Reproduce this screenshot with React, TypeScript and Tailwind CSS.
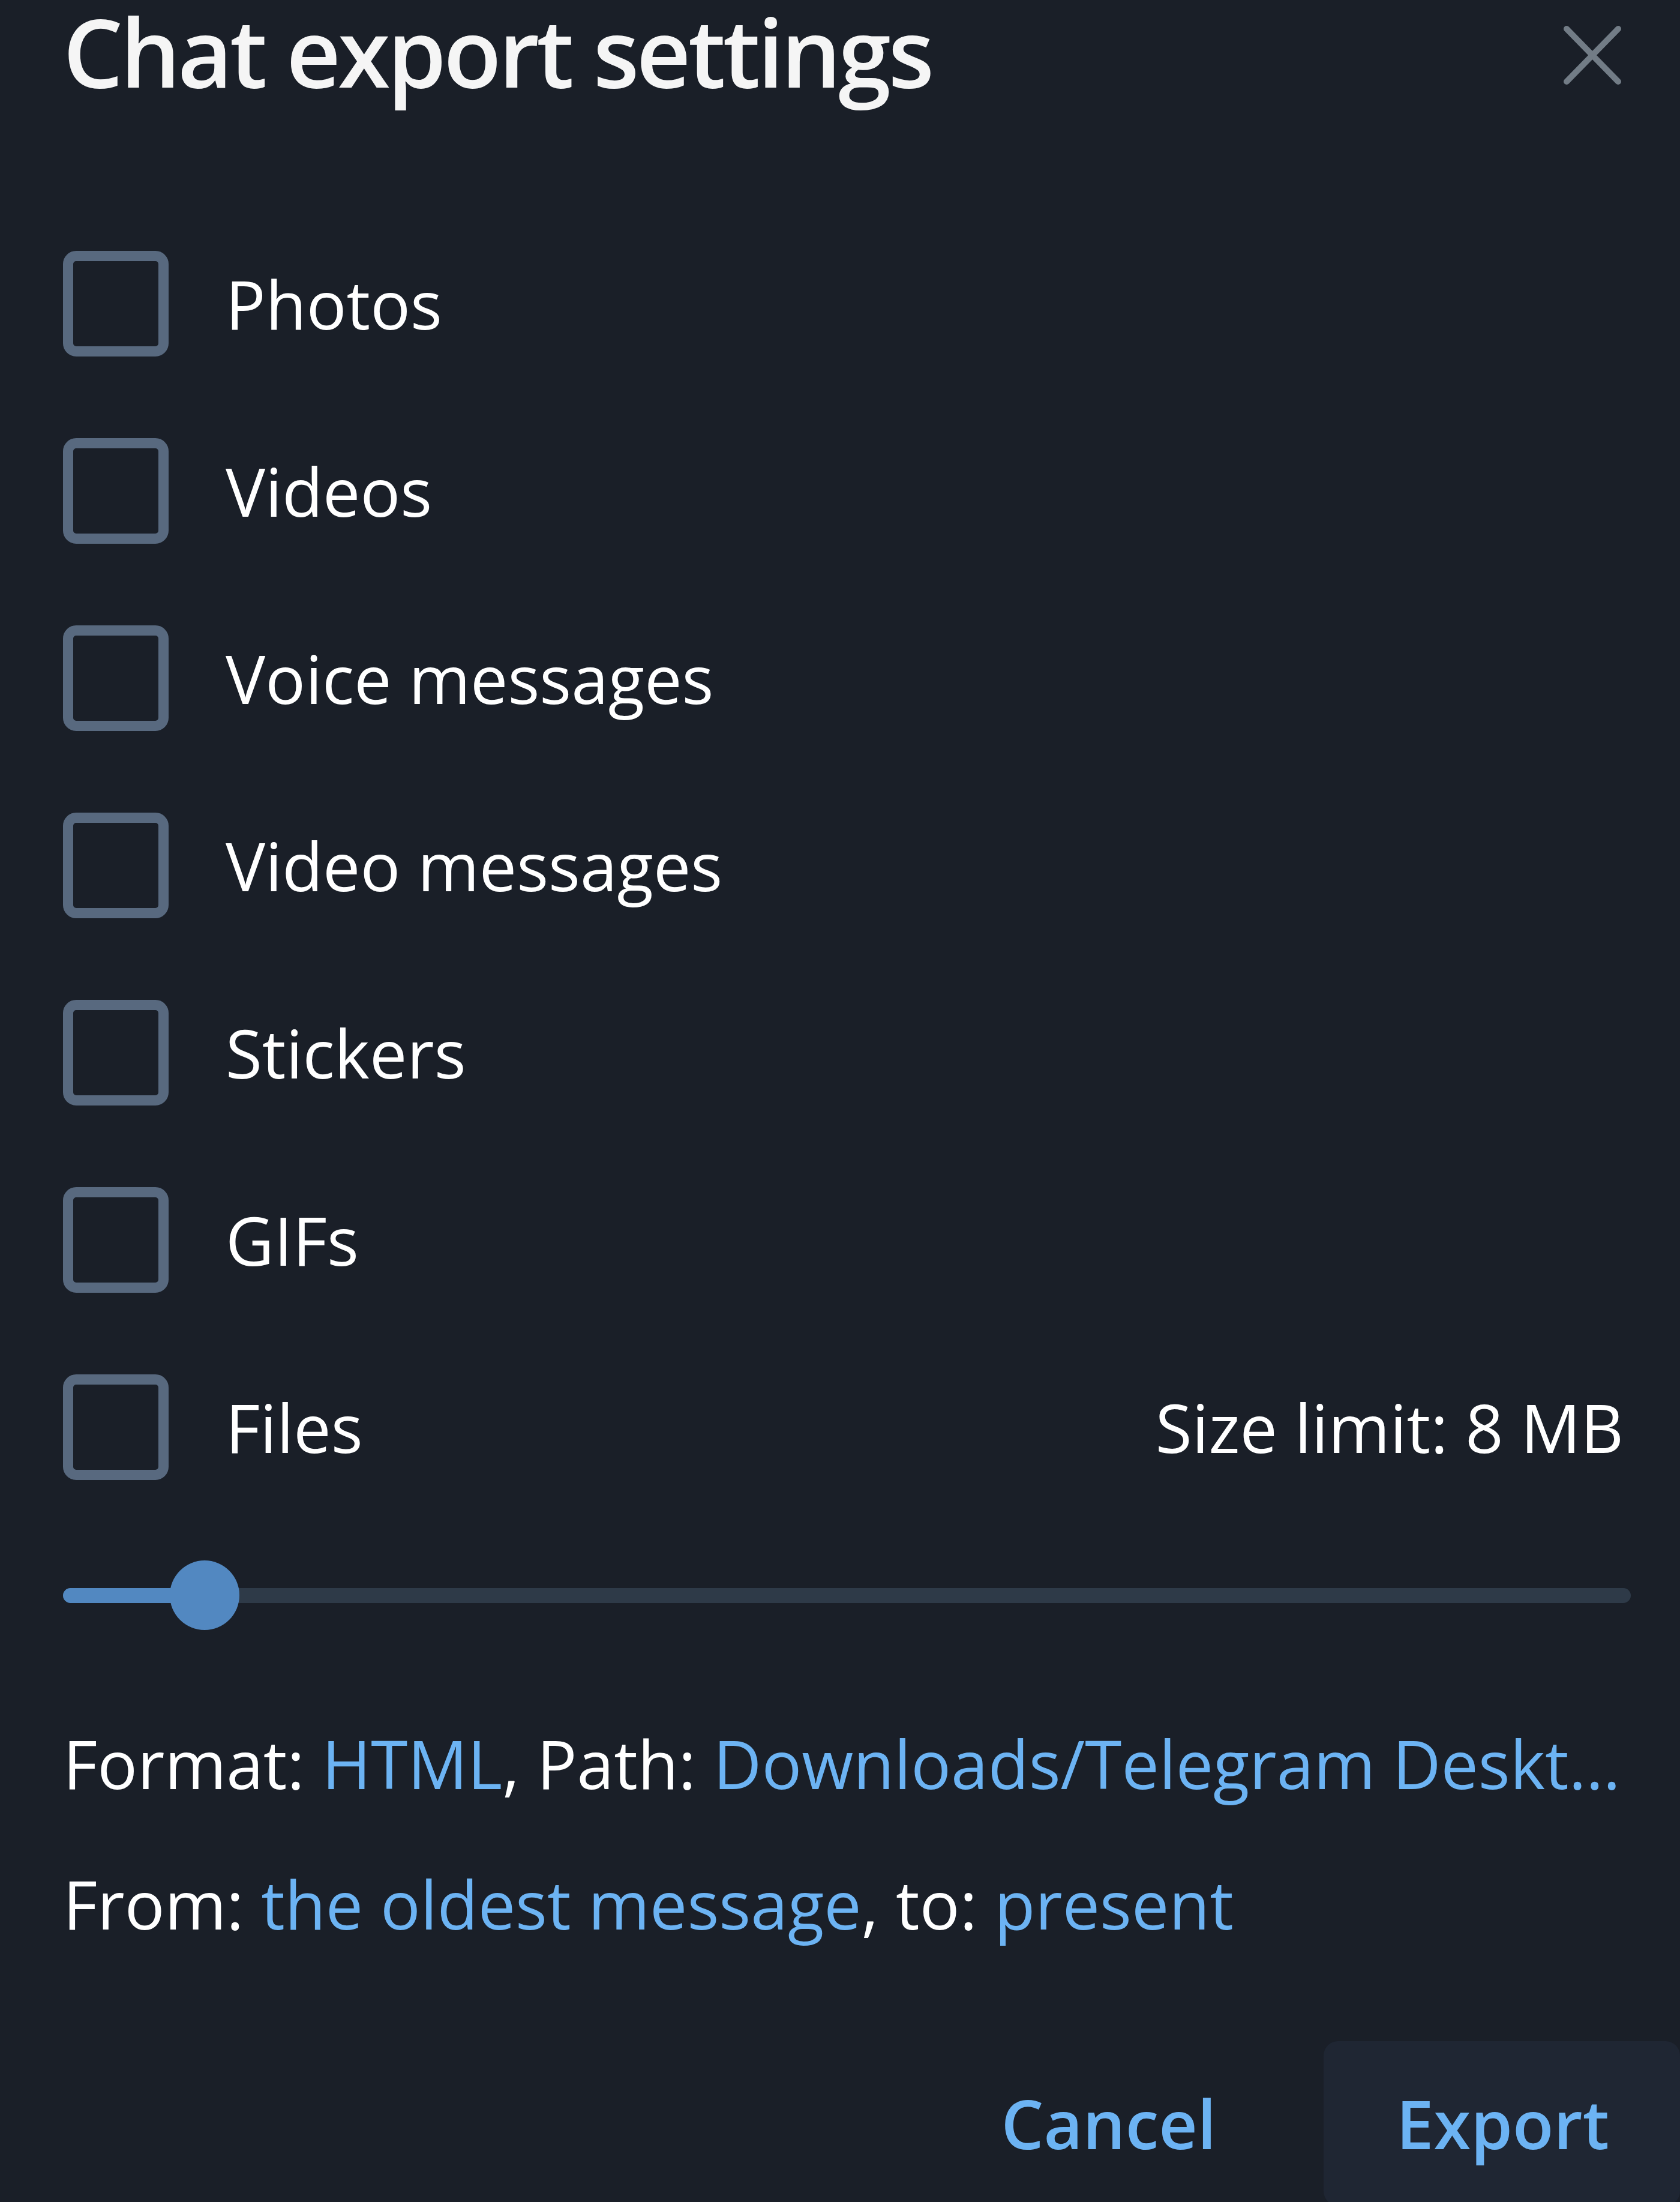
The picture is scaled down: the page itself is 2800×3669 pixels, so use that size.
import React from 'react';

const options = ['Photos', 'Videos', 'Voice messages', 'Video messages', 'Stickers', 'GIFs'];

const Checkbox: React.FC = () => (
  <div className="h-[176px] w-[176px] shrink-0 rounded-[22px] border-[17px] border-[#58697f]" />
);

const OptionRow: React.FC<{ label: string; right?: string }> = ({ label, right }) => (
  <div className="flex h-[312px] items-center">
    <Checkbox />
    <span className="ml-[95px] text-[111px] leading-none">{label}</span>
    {right && <span className="ml-auto text-[111px] leading-none">{right}</span>}
  </div>
);

export default function App() {
  return (
    <div className="h-[3669px] w-[2800px] overflow-hidden bg-[#1a1f28] pl-[105px] pr-[94px] font-['Open_Sans',sans-serif] text-white">
      <div className="flex h-[350px] items-start justify-between">
        <h1 className="text-[158px] font-semibold leading-[1.08] tracking-[-0.03em] text-[#f5f5f5]">
          Chat export settings
        </h1>
        <svg className="mr-[3px] mt-[42px] h-[100px] w-[98px]" viewBox="0 0 98 100" fill="none">
          <path d="M6 6 L92 94 M92 6 L6 94" stroke="#727c86" strokeWidth="10" strokeLinecap="round" />
        </svg>
      </div>

      {options.map((o) => (
        <OptionRow key={o} label={o} />
      ))}
      <OptionRow label="Files" right="Size limit: 8 MB" />

      <div className="relative mt-[66px] flex h-[116px] w-[2613px] items-center">
        <div className="h-[25px] w-full overflow-hidden rounded-full bg-[#2e3a48]">
          <div className="h-full w-[236px] bg-[#5288c1]" />
        </div>
        <div className="absolute left-[178px] top-0 h-[116px] w-[116px] rounded-full bg-[#5288c1]" />
      </div>

      <div className="mt-[167px] whitespace-nowrap text-[111px] leading-none">
        Format: <span className="text-[#6cb3f3]">HTML</span>, Path:{' '}
        <span className="text-[#6cb3f3]">Downloads/Telegram Deskt…</span>
      </div>
      <div className="mt-[123px] whitespace-nowrap text-[111px] leading-none">
        From: <span className="text-[#6cb3f3]">the oldest message</span>, to:{' '}
        <span className="text-[#6cb3f3]">present</span>
      </div>

      <div className="-mr-[94px] mt-[173px] flex justify-end">
        <button className="flex h-[274px] items-center rounded-[24px] px-[124px] text-[112px] font-semibold leading-none text-[#6cb3f3]">
          Cancel
        </button>
        <button className="ml-[55px] flex h-[274px] items-center rounded-[24px] bg-[#1f2633] pl-[121px] pr-[118px] text-[112px] font-semibold leading-none text-[#6cb3f3]">
          Export
        </button>
      </div>
    </div>
  );
}
